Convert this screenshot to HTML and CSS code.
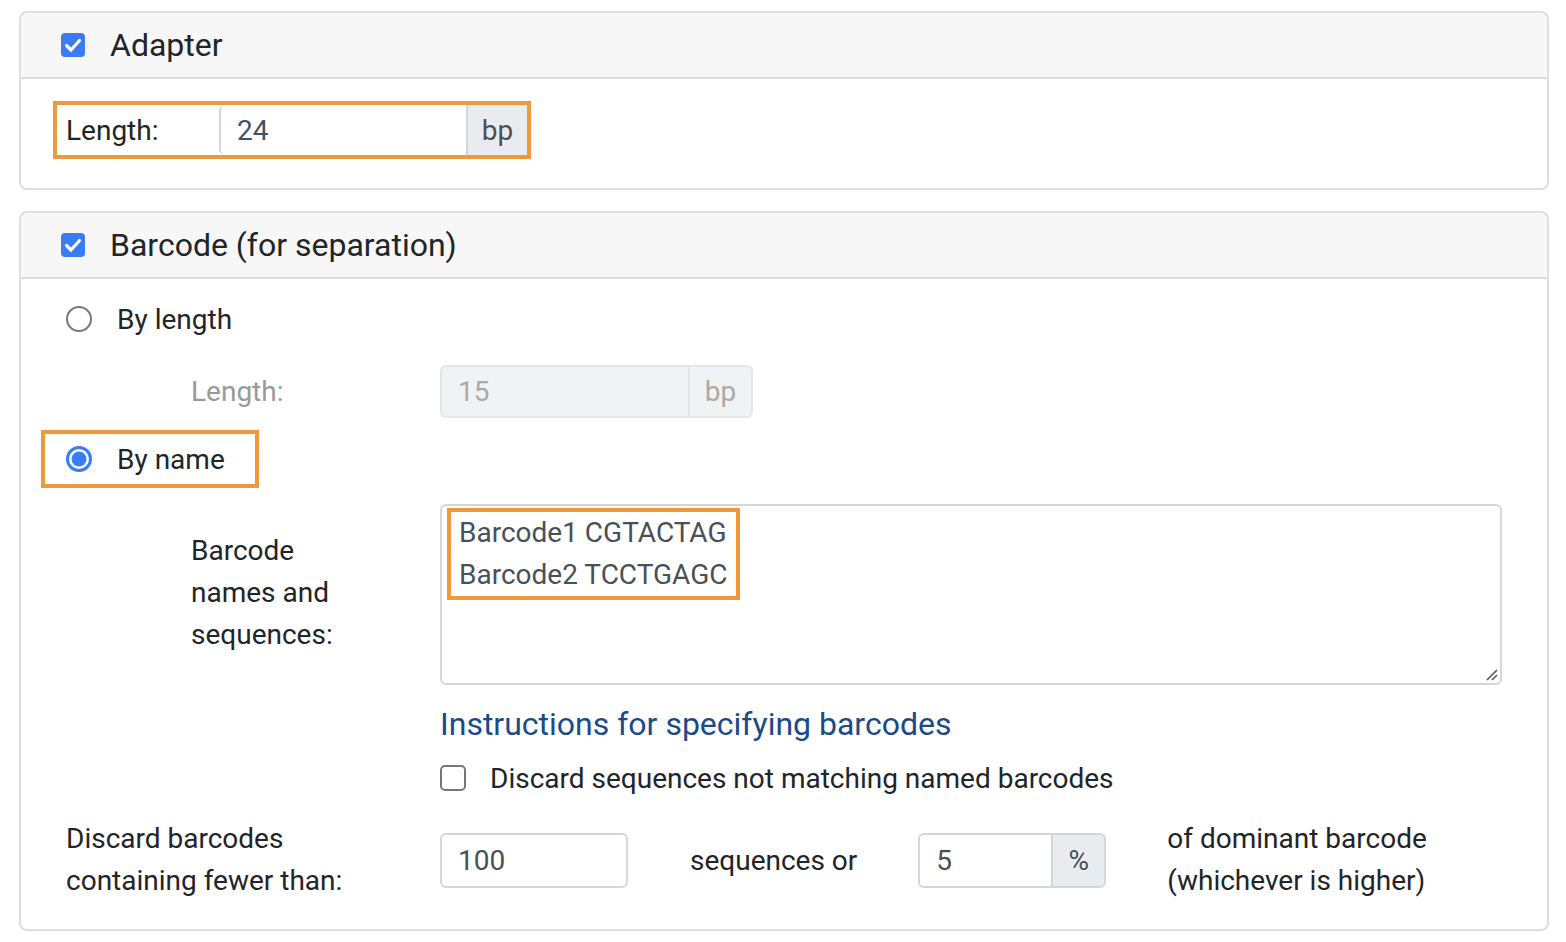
FILE: index.html
```html
<!DOCTYPE html>
<html>
<head>
<meta charset="utf-8">
<link rel="stylesheet" href="styles.css">
</head>
<body>
<div class="panel">
  <div class="panel-head">
    <span class="cb cb-on"><svg viewBox="0 0 24 24" width="24" height="24"><rect x="0" y="0" width="24" height="24" rx="4" fill="#3a7cf5"/><path d="M5.5 12.5 L10 17 L18.5 7.5" fill="none" stroke="#fff" stroke-width="3.2" stroke-linecap="round" stroke-linejoin="round"/></svg></span>
    <span class="head-title">Adapter</span>
  </div>
  <div class="panel-body p1">
    <div class="hl len-group">
      <span class="len-label">Length:</span>
      <div class="igroup w1">
        <input class="ifield" type="text" value="24" readonly>
        <span class="iaddon">bp</span>
      </div>
    </div>
  </div>
</div>

<div class="panel panel2">
  <div class="panel-head">
    <span class="cb cb-on"><svg viewBox="0 0 24 24" width="24" height="24"><rect x="0" y="0" width="24" height="24" rx="4" fill="#3a7cf5"/><path d="M5.5 12.5 L10 17 L18.5 7.5" fill="none" stroke="#fff" stroke-width="3.2" stroke-linecap="round" stroke-linejoin="round"/></svg></span>
    <span class="head-title">Barcode (for separation)</span>
  </div>
  <div class="panel-body p2">
    <div class="radio-row r1">
      <span class="radio"><svg viewBox="0 0 26 26" width="26" height="26"><circle cx="13" cy="13" r="12" fill="#fff" stroke="#777" stroke-width="2"/></svg></span>
      <span class="radio-text">By length</span>
    </div>
    <div class="form-row r2">
      <span class="flabel dis-label">Length:</span>
      <div class="igroup w2 disabled">
        <input class="ifield" type="text" value="15" readonly>
        <span class="iaddon">bp</span>
      </div>
    </div>
    <div class="radio-row r3 hl">
      <span class="radio"><svg viewBox="0 0 26 26" width="26" height="26"><circle cx="13" cy="13" r="11.5" fill="#fff" stroke="#3a7cf5" stroke-width="3"/><circle cx="13" cy="13" r="7.5" fill="#3a7cf5"/></svg></span>
      <span class="radio-text">By name</span>
    </div>
    <div class="form-row r4">
      <span class="flabel names-label">Barcode<br>names and<br>sequences:</span>
      <div class="tarea">
        <div class="hl ta-text">Barcode1 CGTACTAG<br>Barcode2 TCCTGAGC</div>
        <svg class="grip" viewBox="0 0 14 14" width="14" height="14"><path d="M3 13 L13 3 M8 13 L13 8" stroke="#555" stroke-width="1.6" fill="none"/></svg>
      </div>
    </div>
    <div class="link-row"><a class="link" href="#">Instructions for specifying barcodes</a></div>
    <div class="check-row">
      <span class="cb"><svg viewBox="0 0 26 26" width="26" height="26"><rect x="1" y="1" width="24" height="24" rx="4" fill="#fff" stroke="#777" stroke-width="2"/></svg></span>
      <span class="check-text">Discard sequences not matching named barcodes</span>
    </div>
    <div class="form-row r5">
      <span class="flabel disc-label">Discard barcodes<br>containing fewer than:</span>
      <div class="disc-controls">
        <input class="ifield solo" type="text" value="100" readonly>
        <span class="mid-text">sequences or</span>
        <div class="igroup w3">
          <input class="ifield" type="text" value="5" readonly>
          <span class="iaddon pct">%</span>
        </div>
        <span class="end-text">of dominant barcode<br>(whichever is higher)</span>
      </div>
    </div>
  </div>
</div>
</body>
</html>
```
FILE: styles.css
```css
* { box-sizing: border-box; }
body {
  margin: 0;
  padding: 11px 17px 0 19px;
  font-family: Roboto, "Liberation Sans", sans-serif;
  color: #212529;
  background: #fff;
  font-size: 28px;
}
.panel {
  border: 2px solid #dedede;
  border-radius: 8px;
  overflow: hidden;
}
.panel2 { margin-top: 21px; }
.panel-head {
  height: 66px;
  background: #f7f7f7;
  border-bottom: 2px solid #dcdcdc;
  display: flex;
  align-items: center;
  padding-left: 40px;
}
.cb { display: inline-flex; width: 24px; height: 24px; }
.cb svg { display: block; }
.head-title {
  margin-left: 25px;
  font-size: 32px;
  line-height: 1;
  color: #212529;
}
.hl { border: 4px solid #f0993b; }
.p1 { padding: 22px 0 29px 32px; }
.len-group {
  display: inline-flex;
  align-items: stretch;
  height: 58px;
}
.len-label {
  width: 162px;
  padding-left: 9px;
  display: flex;
  align-items: center;
}
.igroup {
  display: flex;
  align-items: stretch;
}
.ifield {
  font-family: Roboto, "Liberation Sans", sans-serif;
  font-size: 28px;
  color: #495057;
  border: 2px solid #d3d7db;
  border-radius: 6px 0 0 6px;
  padding: 0 0 0 16px;
  margin: 0;
  background: #fff;
  outline: none;
  min-width: 0;
}
.iaddon {
  display: flex;
  align-items: center;
  justify-content: center;
  background: #e9ecef;
  border: 2px solid #d3d7db;
  border-left: none;
  border-radius: 0 6px 6px 0;
  color: #495057;
  font-size: 28px;
}
.w1 .ifield { width: 247px; border-radius: 6px 0 0 6px; }
.w1 .iaddon { width: 61px; border-radius: 0; border-top: none; border-bottom: none; border-right: none; border-left: 2px solid #d3d7db; }
.w1 .ifield { border-right: none; border-top: none; border-bottom: none; }
.p2 { padding: 11px 0 27px 20px; }
.radio-row {
  display: inline-flex;
  align-items: center;
  height: 58px;
  padding: 0 30px 0 21px;
  border: 4px solid transparent;
}
.radio-row.hl { border-color: #f0993b; }
.r1 { display: flex; width: max-content; }
.r3 { display: flex; width: max-content; margin-top: 12px; }
.radio { display: inline-flex; width: 26px; height: 26px; }
.radio svg { display: block; }
.radio-text { margin-left: 25px; }
.form-row {
  display: flex;
  align-items: flex-start;
  padding-left: 25px;
}
.flabel { width: 374px; flex: none; line-height: 42px; }
.r2 { margin-top: 17px; align-items: center; }
.dis-label { color: #999; padding-left: 125px; }
.w2 { height: 53px; }
.w2 .ifield { width: 248px; background: #f1f2f4; color: #aaa; border-color: #e4e6e8; }
.w2 .iaddon { width: 65px; background: #f1f2f4; color: #aaa; border-color: #e4e6e8; border-left: 2px solid #e4e6e8; }
.w2 .ifield { border-right: none; }
.r4 { margin-top: 16px; }
.names-label { padding-left: 125px; padding-top: 26px; }
.tarea {
  position: relative;
  width: 1062px;
  height: 181px;
  border: 2px solid #d3d7db;
  border-radius: 6px;
  padding: 2px 0 0 5px;
  color: #495057;
}
.ta-text {
  display: inline-block;
  line-height: 42px;
  padding: 0 8px 0 8px;
}
.grip { position: absolute; right: 2px; bottom: 2px; }
.link-row { margin-top: 19px; padding-left: 399px; line-height: 40px; }
.link { color: #1b4a8b; text-decoration: none; font-size: 32px; }
.check-row {
  margin-top: 11px;
  padding-left: 399px;
  display: flex;
  align-items: center;
  height: 42px;
}
.check-row .cb { width: 26px; height: 26px; }
.check-text { margin-left: 24px; }
.r5 { margin-top: 19px; }
.disc-label { line-height: 42px; }
.disc-controls {
  display: flex;
  align-items: center;
  height: 84px;
}
.solo {
  width: 188px;
  height: 55px;
  border-radius: 6px;
}
.mid-text { margin-left: 62px; }
.w3 { margin-left: 61px; height: 55px; }
.w3 .ifield { width: 133px; border-right: none; }
.w3 .iaddon { width: 55px; border-left: 2px solid #d3d7db; }
.end-text { margin-left: 61px; line-height: 42px; }
```
